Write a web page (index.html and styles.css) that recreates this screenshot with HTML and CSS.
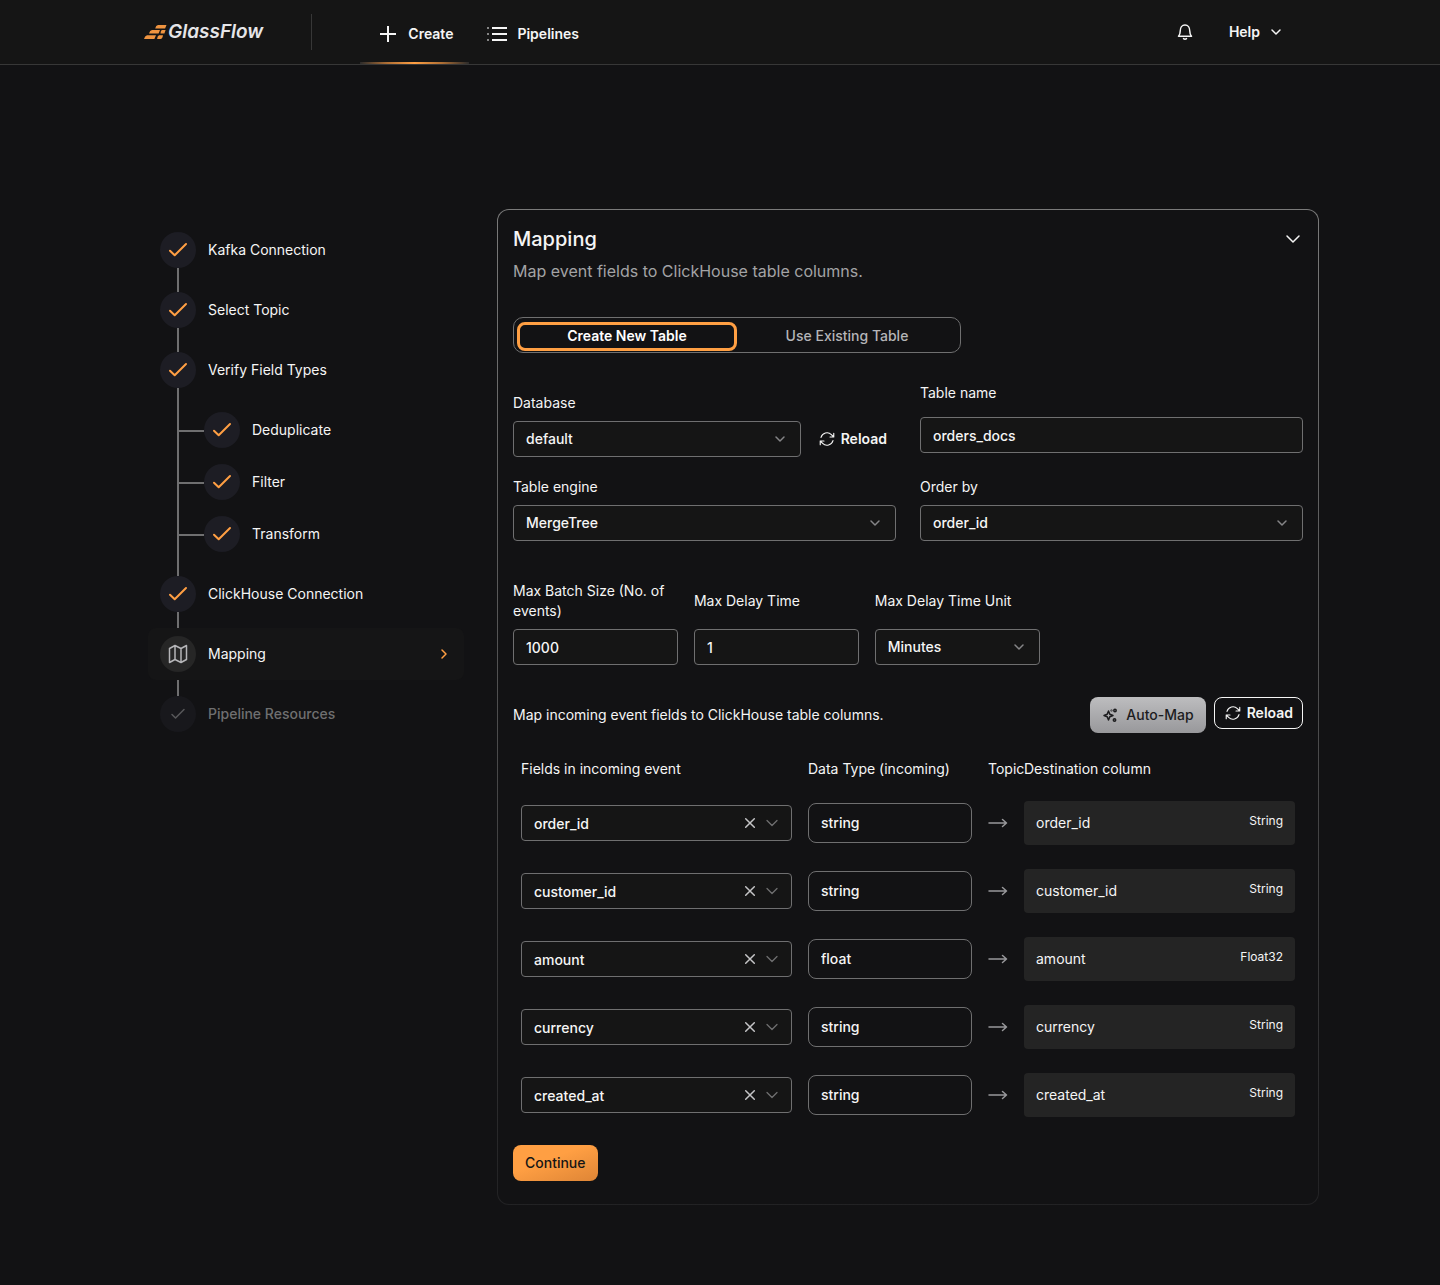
FILE: index.html
```html
<!DOCTYPE html>
<html lang="en">
  <head>
    <meta charset="UTF-8" />
    <meta name="viewport" content="width=device-width, initial-scale=1.0" />
    <title>GlassFlow - Create Pipeline</title>
    <link rel="stylesheet" href="styles.css">
  </head>
  <body>
    <!-- shared icons -->
    <svg class="sprite" aria-hidden="true">
      <symbol id="i-check" viewBox="0 0 24 24"><path d="M4 12.700 8.700 17.300 20 6" /></symbol>
      <symbol id="i-chevron" viewBox="0 0 16 16"><path d="M4 6 8 10 12 6" /></symbol>
      <symbol id="i-close" viewBox="0 0 16 16"><path d="M3.700 3.700l8.600 8.600M12.300 3.700l-8.600 8.600" /></symbol>
      <symbol id="i-arrow" viewBox="0 0 20 16"><path d="M1 8h17.500M14.500 4.500 18.500 8l-4 3.500" /></symbol>
      <symbol id="i-reload" viewBox="0 0 24 24">
        <path d="M16.02 9.35h5M2.98 19.64v-5h5M2.98 14.65l3.19 3.18a8.25 8.25 0 0 0 13.8-3.7M4.03 9.87a8.25 8.25 0 0 1 13.8-3.7l3.19 3.18v-5" />
      </symbol>
    </svg>

    <header class="header">
      <div class="header-inner">
        <a class="logo" href="#">
          <svg width="24" height="16" viewBox="0 0 24 16" aria-hidden="true">
            <path d="M14 1h8.500l-1.400 3.400H11.200q.6-3 2.800-3.400zM8 6h8l-1.400 3.400H5q.8-3 3-3.400zM17.800 6h3.800l-1.200 3.400h-3.900q.1-2.800 1.300-3.400zM3 11.200h9l-1.600 3.900H0q.8-3.400 3-3.900zM15 11.200h4q-.4 3.500-2.600 3.900h-3.300q.3-3.200 1.900-3.900z" />
          </svg>
          <span>GlassFlow</span>
        </a>
        <nav class="nav">
          <a class="nav-link active" href="#">
            <svg class="icon" width="24" height="24" viewBox="0 0 24 24"><path d="M12 4v16M4 12h16" /></svg>
            Create
          </a>
          <a class="nav-link" href="#">
            <svg class="icon" width="24" height="24" viewBox="0 0 24 24"><path d="M7 6h15M7 12h15M7 18h15" /><path class="dim" d="M2 6h2M2 12h2M2 18h2" /></svg>
            Pipelines
          </a>
        </nav>
        <div class="header-actions">
          <button class="bell" type="button" aria-label="Notifications">
            <svg class="icon" width="20" height="20" viewBox="0 0 20 20"><path d="M3.500 14.200c1.300-1.300 1.700-2.600 1.700-5C5.200 5.600 7.100 3 10 3s4.800 2.600 4.800 6.200c0 2.400.4 3.700 1.700 5zM8.500 16.600q1.500 1.200 3 0" /></svg>
          </button>
          <button class="help" type="button">
            Help
            <svg class="icon" width="16" height="16"><use href="#i-chevron" /></svg>
          </button>
        </div>
      </div>
    </header>

    <main class="page">
      <aside class="sidebar">
        <ol class="steps">
          <li class="step">
            <a class="step-row" href="#"><span class="step-icon"><svg class="icon" width="24" height="24"><use href="#i-check" /></svg></span>Kafka Connection</a>
          </li>
          <li class="step">
            <a class="step-row" href="#"><span class="step-icon"><svg class="icon" width="24" height="24"><use href="#i-check" /></svg></span>Select Topic</a>
          </li>
          <li class="step">
            <a class="step-row" href="#"><span class="step-icon"><svg class="icon" width="24" height="24"><use href="#i-check" /></svg></span>Verify Field Types</a>
            <ol class="substeps">
              <li class="substep">
                <a class="step-row" href="#"><span class="step-icon"><svg class="icon" width="24" height="24"><use href="#i-check" /></svg></span>Deduplicate</a>
              </li>
              <li class="substep">
                <a class="step-row" href="#"><span class="step-icon"><svg class="icon" width="24" height="24"><use href="#i-check" /></svg></span>Filter</a>
              </li>
              <li class="substep">
                <a class="step-row" href="#"><span class="step-icon"><svg class="icon" width="24" height="24"><use href="#i-check" /></svg></span>Transform</a>
              </li>
            </ol>
          </li>
          <li class="step">
            <a class="step-row" href="#"><span class="step-icon"><svg class="icon" width="24" height="24"><use href="#i-check" /></svg></span>ClickHouse Connection</a>
          </li>
          <li class="step current">
            <a class="step-row" href="#" aria-current="step">
              <span class="step-icon"><svg class="icon" width="24" height="24" viewBox="0 0 24 24"><path d="M3.500 6.500l5.500-3 6 3 5.500-3v14l-5.500 3-6-3-5.500 3zM9 3.500v14M15 6.500v14" /></svg></span>
              Mapping
              <svg class="icon step-arrow" width="16" height="16" viewBox="0 0 16 16"><path d="M6 4l4 4-4 4" /></svg>
            </a>
          </li>
          <li class="step upcoming">
            <span class="step-row"><span class="step-icon"><svg class="icon" width="18" height="18"><use href="#i-check" /></svg></span>Pipeline Resources</span>
          </li>
        </ol>
      </aside>

      <section class="panel">
        <div class="panel-head">
          <h1>Mapping</h1>
          <button class="collapse" type="button" aria-label="Collapse">
            <svg class="icon" width="20" height="20" viewBox="0 0 20 20"><path d="M4 7 10 13 16 7" /></svg>
          </button>
        </div>
        <p class="subtitle">Map event fields to ClickHouse table columns.</p>

        <div class="tabs" role="tablist">
          <button class="tab active" type="button" role="tab" aria-selected="true">Create New Table</button>
          <button class="tab" type="button" role="tab" aria-selected="false">Use Existing Table</button>
        </div>

        <form>
          <div class="table-fields">
            <div class="field field-database">
              <label for="database">Database</label>
              <div class="with-button">
                <select class="control" id="database"><option>default</option></select>
                <button class="btn btn-reload" type="button">
                  <svg class="icon" width="18" height="18"><use href="#i-reload" /></svg>
                  Reload
                </button>
              </div>
            </div>
            <div class="field field-name">
              <label for="table-name">Table name</label>
              <input class="control" id="table-name" type="text" value="orders_docs" />
            </div>
            <div class="field">
              <label for="engine">Table engine</label>
              <select class="control" id="engine"><option>MergeTree</option></select>
            </div>
            <div class="field">
              <label for="order-by">Order by</label>
              <select class="control" id="order-by"><option>order_id</option></select>
            </div>
          </div>

          <div class="batch-fields">
            <div class="field">
              <label for="batch-size">Max Batch Size (No. of events)</label>
              <input class="control" id="batch-size" type="text" inputmode="numeric" value="1000" />
            </div>
            <div class="field">
              <label for="delay">Max Delay Time</label>
              <input class="control" id="delay" type="text" inputmode="numeric" value="1" />
            </div>
            <div class="field">
              <label for="delay-unit">Max Delay Time Unit</label>
              <select class="control" id="delay-unit"><option>Minutes</option></select>
            </div>
          </div>

          <div class="map-head">
            <p>Map incoming event fields to ClickHouse table columns.</p>
            <button class="btn btn-automap" type="button">
              <svg class="icon" width="16" height="16" viewBox="0 0 16 16"><path d="M6.500 4 7.800 7.200l3.200 1.300-3.200 1.300-1.300 3.200-1.300-3.200L2 8.500l3.200-1.300z" /><circle cx="13" cy="3.500" r="1.200" /><circle cx="12.500" cy="13" r="1.200" /><circle cx="9.500" cy="3.500" r=".3" /></svg>
              Auto-Map
            </button>
            <button class="btn btn-reload btn-outline" type="button">
              <svg class="icon" width="18" height="18"><use href="#i-reload" /></svg>
              Reload
            </button>
          </div>

          <table class="mapping">
            <colgroup>
              <col />
              <col class="col-type" />
              <col class="col-arrow" />
              <col />
            </colgroup>
            <thead>
              <tr>
                <th>Fields in incoming event</th>
                <th>Data Type (incoming)</th>
                <th>Topic</th>
                <th>Destination column</th>
              </tr>
            </thead>
            <tbody>
              <tr>
                <td>
                  <div class="combo">
                    <input type="text" value="order_id" aria-label="Field for order_id" />
                    <button class="clear" type="button" aria-label="Clear"><svg class="icon" width="16" height="16"><use href="#i-close" /></svg></button>
                    <button class="open" type="button" aria-label="Open"><svg class="icon" width="20" height="20"><use href="#i-chevron" /></svg></button>
                  </div>
                </td>
                <td><input class="type" type="text" value="string" readonly aria-label="Type of order_id" /></td>
                <td><svg class="icon arrow" width="20" height="16"><use href="#i-arrow" /></svg></td>
                <td><div class="dest"><span>order_id</span><small>String</small></div></td>
              </tr>
              <tr>
                <td>
                  <div class="combo">
                    <input type="text" value="customer_id" aria-label="Field for customer_id" />
                    <button class="clear" type="button" aria-label="Clear"><svg class="icon" width="16" height="16"><use href="#i-close" /></svg></button>
                    <button class="open" type="button" aria-label="Open"><svg class="icon" width="20" height="20"><use href="#i-chevron" /></svg></button>
                  </div>
                </td>
                <td><input class="type" type="text" value="string" readonly aria-label="Type of customer_id" /></td>
                <td><svg class="icon arrow" width="20" height="16"><use href="#i-arrow" /></svg></td>
                <td><div class="dest"><span>customer_id</span><small>String</small></div></td>
              </tr>
              <tr>
                <td>
                  <div class="combo">
                    <input type="text" value="amount" aria-label="Field for amount" />
                    <button class="clear" type="button" aria-label="Clear"><svg class="icon" width="16" height="16"><use href="#i-close" /></svg></button>
                    <button class="open" type="button" aria-label="Open"><svg class="icon" width="20" height="20"><use href="#i-chevron" /></svg></button>
                  </div>
                </td>
                <td><input class="type" type="text" value="float" readonly aria-label="Type of amount" /></td>
                <td><svg class="icon arrow" width="20" height="16"><use href="#i-arrow" /></svg></td>
                <td><div class="dest"><span>amount</span><small>Float32</small></div></td>
              </tr>
              <tr>
                <td>
                  <div class="combo">
                    <input type="text" value="currency" aria-label="Field for currency" />
                    <button class="clear" type="button" aria-label="Clear"><svg class="icon" width="16" height="16"><use href="#i-close" /></svg></button>
                    <button class="open" type="button" aria-label="Open"><svg class="icon" width="20" height="20"><use href="#i-chevron" /></svg></button>
                  </div>
                </td>
                <td><input class="type" type="text" value="string" readonly aria-label="Type of currency" /></td>
                <td><svg class="icon arrow" width="20" height="16"><use href="#i-arrow" /></svg></td>
                <td><div class="dest"><span>currency</span><small>String</small></div></td>
              </tr>
              <tr>
                <td>
                  <div class="combo">
                    <input type="text" value="created_at" aria-label="Field for created_at" />
                    <button class="clear" type="button" aria-label="Clear"><svg class="icon" width="16" height="16"><use href="#i-close" /></svg></button>
                    <button class="open" type="button" aria-label="Open"><svg class="icon" width="20" height="20"><use href="#i-chevron" /></svg></button>
                  </div>
                </td>
                <td><input class="type" type="text" value="string" readonly aria-label="Type of created_at" /></td>
                <td><svg class="icon arrow" width="20" height="16"><use href="#i-arrow" /></svg></td>
                <td><div class="dest"><span>created_at</span><small>String</small></div></td>
              </tr>
            </tbody>
          </table>

          <button class="btn btn-primary" type="submit">Continue</button>
        </form>
      </section>
    </main>
  </body>
</html>
```

FILE: styles.css
```css
* {
  box-sizing: border-box;
  margin: 0;
  padding: 0;
}

html {
  color-scheme: dark;
}

body {
  min-height: 100vh;
  background-color: #121214;
  color: #f5f5f5;
  font-family: Inter, "Liberation Sans", sans-serif;
  font-size: 14px;
  line-height: 20px;
}

a {
  color: inherit;
  text-decoration: none;
}

button,
input,
select {
  color: inherit;
  font: inherit;
  font-weight: 500;
}

button {
  background: none;
  border: 0;
  cursor: pointer;
}

ol {
  list-style: none;
}

.sprite {
  display: none;
}

.icon {
  flex: none;
  fill: none;
  stroke: currentColor;
  stroke-width: 1.5;
  stroke-linecap: round;
  stroke-linejoin: round;
}

/* header */

.header {
  background-color: #151515;
  border-bottom: 1px solid #373737;
}

.header-inner {
  display: flex;
  align-items: center;
  max-width: 1152px;
  height: 64px;
  margin: 0 auto;
}

.logo {
  display: flex;
  align-items: center;
  color: #e5e5e8;
  font-size: 19px;
  font-style: italic;
  font-weight: 600;
}

.logo svg {
  fill: #ef9440;
}

.nav {
  display: flex;
  align-self: center;
  height: 36px;
  margin-left: 48px;
  padding-left: 48px;
  border-left: 1px solid #373737;
}

.nav-link {
  position: relative;
  display: flex;
  align-items: center;
  gap: 8px;
  padding: 4px 16px 0;
  font-weight: 600;
}

.nav-link .icon {
  stroke-width: 2;
  stroke-linecap: butt;
}

.nav-link .dim {
  opacity: 0.5;
}

.nav-link.active::after {
  content: "";
  position: absolute;
  left: 0;
  right: 0;
  bottom: -14px;
  height: 2px;
  background: linear-gradient(90deg, #2a2a2a, #b06f34 25%, #ff9f43 50%, #b06f34 75%, #2a2a2a);
}

.header-actions {
  display: flex;
  align-items: center;
  gap: 14px;
  margin-left: auto;
}

.bell {
  display: flex;
  padding: 8px;
}

.help {
  display: flex;
  align-items: center;
  gap: 8px;
  padding: 8px 12px;
  font-weight: 600;
}

/* layout */

.page {
  display: grid;
  grid-template-columns: 316px 1fr;
  gap: 33px;
  align-items: start;
  max-width: 1198px;
  margin: 0 auto;
  padding: 144px 0 80px 27px;
}

/* steps */

.steps {
  display: flex;
  flex-direction: column;
  gap: 8px;
  padding-top: 15px;
}

.step {
  position: relative;
}

.step::after {
  content: "";
  position: absolute;
  top: 44px;
  bottom: -16px;
  left: 29px;
  width: 2px;
  background-color: #6f6f70;
}

.step:last-child::after {
  display: none;
}

.step-row {
  display: flex;
  align-items: center;
  gap: 12px;
  padding: 8px 12px;
  border-radius: 8px;
}

.step-icon {
  display: flex;
  align-items: center;
  justify-content: center;
  width: 36px;
  height: 36px;
  border-radius: 50%;
  background-color: #1d1d24;
  color: #ff9f43;
}

.step-icon .icon {
  stroke-width: 2;
}

.substeps {
  padding-top: 8px;
}

.substep {
  position: relative;
  padding-left: 44px;
}

.substep::before {
  content: "";
  position: absolute;
  top: 26px;
  left: 31px;
  width: 25px;
  height: 2px;
  background-color: #6f6f70;
}

.step.current {
  z-index: 1;
}

.step.current::after {
  top: 100%;
}

.step.current .step-row {
  background-color: #151516;
}

.step.current .step-icon {
  background-color: #262626;
  color: #b5b5b8;
}

.step.current .step-icon .icon {
  stroke-width: 1.5;
}

.step-arrow {
  margin-left: auto;
  color: #ff9f43;
}

.step.upcoming {
  color: #6f6f70;
  font-weight: 500;
}

.step.upcoming .step-icon {
  background-color: #18181c;
  color: #58585a;
}

/* panel */

.panel {
  padding: 15px 15px 23px;
  border: 1px solid transparent;
  border-radius: 12px;
  background: linear-gradient(#121214, #121214) padding-box, linear-gradient(#7a7a7a, #222224) border-box;
}

.panel-head {
  display: flex;
  align-items: center;
  justify-content: space-between;
}

h1 {
  font-size: 20px;
  font-weight: 500;
  line-height: 28px;
}

.collapse {
  display: flex;
}

.subtitle {
  margin-top: 6px;
  color: #a3a3a5;
  font-size: 16px;
  line-height: 24px;
}

.tabs {
  display: flex;
  max-width: 448px;
  height: 36px;
  margin: 34px 0 30px;
  padding: 4px 3px 1px;
  border: 1px solid #6f6f70;
  border-radius: 10px;
}

.tab {
  flex: 1;
  padding-bottom: 2px;
  border: 3px solid transparent;
  border-radius: 8px;
  color: #b5b5b8;
}

.tab.active {
  border-color: #ff9f43;
  color: #ffffff;
  font-weight: 600;
}

.table-fields {
  display: grid;
  grid-template-columns: 1fr 1fr;
  gap: 20px 24px;
}

.field {
  display: flex;
  flex-direction: column;
  gap: 8px;
}

.field-database {
  padding-top: 10px;
}

.field-name {
  gap: 14px;
}

.control {
  width: 100%;
  height: 36px;
  padding: 0 12px;
  border: 1px solid #6f6f70;
  border-radius: 4px;
  background-color: #151515;
}

select.control {
  appearance: none;
  background-image: url("data:image/svg+xml,%3Csvg xmlns='http://www.w3.org/2000/svg' width='16' height='16' fill='none' stroke='%23858587' stroke-width='1.500' stroke-linecap='round' stroke-linejoin='round'%3E%3Cpath d='M4 6 8 10 12 6'/%3E%3C/svg%3E");
  background-repeat: no-repeat;
  background-position: right 12px center;
}

.with-button {
  display: flex;
  gap: 8px;
}

.batch-fields {
  display: grid;
  grid-template-columns: repeat(3, 1fr);
  gap: 16px;
  width: 66.67%;
  margin-top: 40px;
}

.batch-fields label {
  display: flex;
  align-items: center;
  height: 40px;
}

/* buttons */

.btn {
  display: flex;
  align-items: center;
  gap: 8px;
  height: 36px;
  padding: 0 12px;
  border-radius: 8px;
}

.btn-reload {
  gap: 5px;
  padding: 0 9px;
  font-weight: 600;
}

.btn-automap {
  background: linear-gradient(#bdbdbf, #98989b);
  color: #1c1c1e;
}

.btn-outline {
  height: 32px;
  border: 1px solid #f5f5f5;
}

.btn-primary {
  margin-top: 16px;
  background: linear-gradient(160deg, #ff9f43 40%, #de8536);
  color: #151515;
}

/* mapping table */

.map-head {
  display: flex;
  align-items: flex-start;
  gap: 8px;
  margin: 32px 0 16px;
}

.map-head p {
  flex: 1;
  line-height: 36px;
}

.mapping {
  width: 100%;
  border-collapse: collapse;
  table-layout: fixed;
}

.col-type {
  width: 180px;
}

.col-arrow {
  width: 36px;
}

.mapping th {
  height: 40px;
  padding: 0 8px;
  font-weight: 400;
  text-align: left;
  white-space: nowrap;
}

.mapping td {
  height: 68px;
  padding: 0 8px;
}

.combo {
  display: flex;
  align-items: center;
  gap: 4px;
  height: 36px;
  padding: 0 9px 0 12px;
  border: 1px solid #6f6f70;
  border-radius: 4px;
  background-color: #151515;
}

.combo input {
  flex: 1;
  min-width: 0;
  height: 100%;
  border: 0;
  background: none;
}

.combo button {
  display: flex;
}

.clear {
  color: #c5c5c7;
}

.open {
  color: #6f6f70;
}

.open .icon {
  stroke-width: 1;
}

.type {
  display: block;
  width: 100%;
  height: 40px;
  padding: 0 12px 2px;
  border: 1px solid #6f6f70;
  border-radius: 8px;
  background: none;
}

.arrow {
  display: block;
  color: #98989b;
}

.dest {
  display: flex;
  justify-content: space-between;
  height: 44px;
  padding: 12px;
  border-radius: 4px;
  background-color: #242424;
}

.dest small {
  font-size: 12px;
  line-height: 16px;
}
```
